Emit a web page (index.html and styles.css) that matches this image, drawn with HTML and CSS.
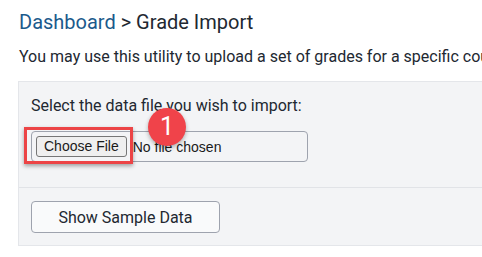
FILE: index.html
```html
<!DOCTYPE html>
<html>
<head>
<meta charset="utf-8">
<link rel="stylesheet" href="styles.css">
</head>
<body>
<div class="page">
  <h1 class="title"><span class="crumb">Dashboard</span> &gt; Grade Import</h1>
  <p class="desc">You may use this utility to upload a set of grades for a specific course section.</p>
  <div class="panel">
    <div class="section first">
      <div class="label">Select the data file you wish to import:</div>
      <div class="file">
        <span class="file-btn">Choose File</span>
        <span class="file-name">No file chosen</span>
        <div class="highlight"></div>
        <div class="badge">1</div>
      </div>
    </div>
    <div class="section second">
      <button class="btn" type="button">Show Sample Data</button>
    </div>
  </div>
</div>
</body>
</html>
```
FILE: styles.css
```css
html, body {
  margin: 0;
  padding: 0;
  background: #ffffff;
  overflow: hidden;
}
body {
  font-family: Roboto, "Liberation Sans", Arial, sans-serif;
  color: #222831;
}
.page {
  padding: 10px 0 0 18px;
}
.title {
  margin: 0 0 13px 1px;
  font-size: 20px;
  line-height: 24px;
  font-weight: 400;
  color: #222831;
  white-space: nowrap;
}
.crumb {
  color: #1b5a8c;
}
.desc {
  margin: 0 0 14px 1px;
  font-size: 16px;
  line-height: 20px;
  white-space: nowrap;
}
.panel {
  width: 560px;
  background: #f3f4f6;
  border: 1px solid #e4e6ea;
}
.section {
  padding: 0 12px;
}
.section.first {
  padding-top: 14px;
  padding-bottom: 25px;
  border-bottom: 1px solid #e1e3e7;
}
.section.second {
  padding-top: 13px;
  padding-bottom: 12px;
}
.label {
  font-size: 16px;
  line-height: 20px;
  margin-bottom: 15px;
}
.file {
  position: relative;
  box-sizing: border-box;
  width: 277px;
  height: 31px;
  border: 1px solid #9ea3ae;
  border-radius: 4px;
  display: flex;
  align-items: center;
  padding-left: 4px;
  gap: 6px;
  font-family: "Liberation Sans", Arial, sans-serif;
  font-size: 14px;
  color: #1a1a1a;
}
.file-btn {
  box-sizing: border-box;
  height: 21px;
  line-height: 19px;
  padding: 0 7px;
  background: #efefef;
  border: 1px solid #767676;
  border-radius: 3px;
  white-space: nowrap;
}
.file-name {
  white-space: nowrap;
}
.highlight {
  position: absolute;
  left: -8px;
  top: -5px;
  width: 109px;
  height: 37px;
  box-sizing: border-box;
  border: 3px solid #ec4446;
  box-shadow: 0 2px 4px rgba(0, 0, 0, 0.35);
}
.badge {
  position: absolute;
  left: 116px;
  top: -24px;
  width: 38px;
  height: 38px;
  border-radius: 50%;
  background: #f0434a;
  box-shadow: 0 2px 4px rgba(0, 0, 0, 0.3);
  color: #ffffff;
  font-family: Roboto, "Liberation Sans", Arial, sans-serif;
  font-size: 25px;
  line-height: 38px;
  text-align: center;
}
.btn {
  box-sizing: border-box;
  width: 189px;
  height: 32px;
  margin: 0;
  padding: 0;
  background: #f9fafb;
  border: 1px solid #9ea3ae;
  border-radius: 4px;
  font-family: Roboto, "Liberation Sans", Arial, sans-serif;
  font-size: 16px;
  color: #222831;
}
```
